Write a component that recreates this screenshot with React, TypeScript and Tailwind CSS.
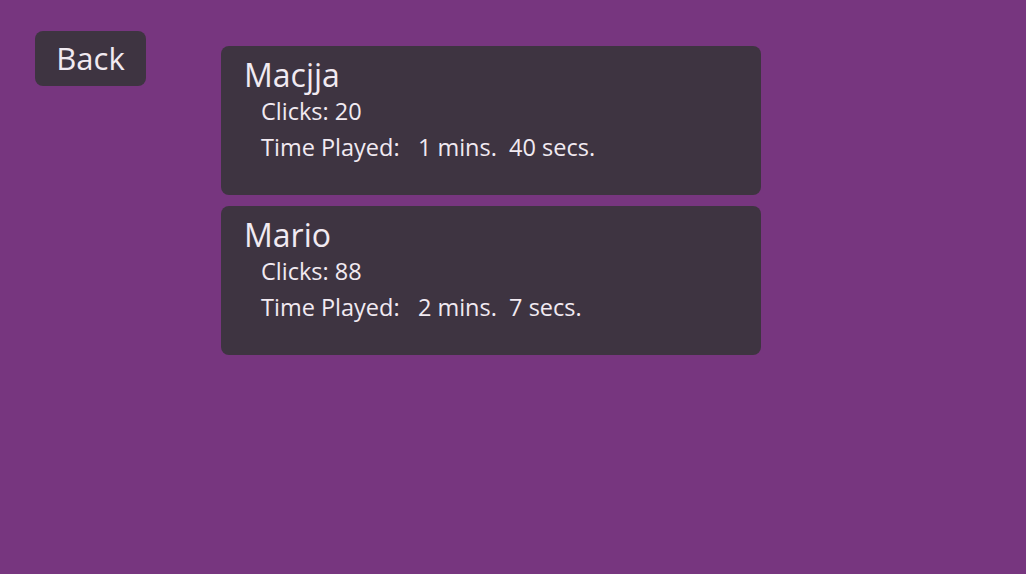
import React from 'react';

interface IPlayer {
  name: string;
  clicks: number;
  mins: number;
  secs: number;
}

const players: IPlayer[] = [
  { name: 'Macjja', clicks: 20, mins: 1, secs: 40 },
  { name: 'Mario', clicks: 88, mins: 2, secs: 7 },
];

const PlayerCard: React.FC<IPlayer> = ({ name, clicks, mins, secs }) => {
  return (
    <div className="flex flex-col w-[540px] h-[149px] bg-[#3e3441] rounded-lg pl-[23px] pt-[13px]">
      <div className="text-[32px] leading-[32px]">{name}</div>
      <div className="flex flex-col mt-[2px] pl-[17px] text-[23.5px] leading-[36px]">
        <div>{`Clicks: ${clicks}`}</div>
        <div className="whitespace-pre">{`Time Played:   ${mins} mins.  ${secs} secs.`}</div>
      </div>
    </div>
  );
};

const App: React.FC = () => {
  return (
    <div
      className="flex w-full h-[574px] bg-[#77367f] text-[#f1eaf1] overflow-hidden"
      style={{ fontFamily: '"Open Sans", "Noto Sans", sans-serif' }}>
      <div className="pl-[35px] pt-[31px]">
        <button className="w-[111px] h-[55px] flex items-center justify-center bg-[#3e3441] rounded-lg text-[31px] leading-none">
          Back
        </button>
      </div>
      <div className="flex flex-col gap-[11px] ml-[75px] pt-[46px]">
        {players.map((p) => (
          <PlayerCard key={p.name} {...p} />
        ))}
      </div>
    </div>
  );
};

export default App;
